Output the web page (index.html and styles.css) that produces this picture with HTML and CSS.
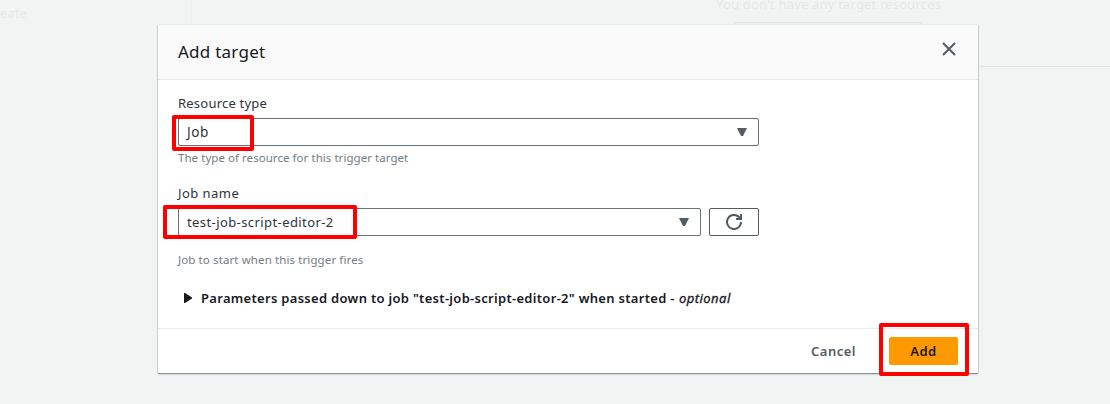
FILE: index.html
```html
<!DOCTYPE html>
<html lang="en">
<head>
<meta charset="utf-8">
<title>Add target</title>
<link rel="stylesheet" href="styles.css">
</head>
<body>
<div class="page">
  <div class="backdrop">
    <aside class="side"><span class="side-text">eate</span></aside>
    <main class="main">
      <div class="empty"><p class="empty-text">You don't have any target resources</p><div class="empty-button"></div></div>
    </main>
  </div>
  <section class="modal" role="dialog">
    <header class="modal-header">
      <h2 class="title">Add target</h2>
      <svg class="close" width="16" height="16" viewBox="0 0 16 16"><path d="M2 2l12 12M14 2L2 14" fill="none" stroke="#545b64" stroke-width="2"/></svg>
    </header>
    <div class="modal-body">
      <div class="label">Resource type</div>
      <div class="select"><span class="value-job">Job</span><svg width="10" height="8" viewBox="0 0 10 8"><path d="M0 0h10L6 8H4z" fill="#545b64"/></svg><span class="mark mark-job"></span></div>
      <div class="hint">The type of resource for this trigger target</div>
      <div class="label label-name">Job name</div>
      <div class="row">
        <div class="select select-name"><span class="value-name">test-job-script-editor-2</span><svg width="10" height="8" viewBox="0 0 10 8"><path d="M0 0h10L6 8H4z" fill="#545b64"/></svg><span class="mark mark-name"></span></div>
        <div class="refresh"><svg width="16" height="16" viewBox="0 0 16 16"><path d="M15 8A7 7 0 1 1 12.7 2.8L15 5" fill="none" stroke="#545b64" stroke-width="2"/><path d="M15 0v5h-5" fill="none" stroke="#545b64" stroke-width="2"/></svg></div>
      </div>
      <div class="hint hint-name">Job to start when this trigger fires</div>
      <div class="expander"><svg width="8" height="10" viewBox="0 0 8 10"><path d="M0 0h1l7 4.4v1.2L1 10H0z" fill="#16191f"/></svg><span class="params">Parameters passed down to job "test-job-script-editor-2" when started - </span><em class="optional">optional</em></div>
    </div>
    <footer class="modal-footer">
      <span class="cancel">Cancel</span>
      <div class="add"><span>Add</span><span class="mark mark-add"></span></div>
    </footer>
  </section>
</div>
</body>
</html>
```
FILE: styles.css
```css
* { box-sizing: border-box; }
body { margin: 0; background: #f2f4f4; font-family: "Noto Sans", "Open Sans", sans-serif; font-size: 13px; color: #16191f; }
.page { position: relative; width: 1110px; height: 404px; overflow: hidden; display: flex; justify-content: center; align-items: flex-start; padding: 25px 0 0 26px; }
.backdrop { position: absolute; inset: 0; display: flex; color: #e5e8e9; }
.side { width: 192px; border-right: 1px solid #eceeef; height: 67px; padding-top: 4px; }
.side-text { line-height: 18px; font-size: 13px; }
.main { flex: 1; height: 67px; border-bottom: 1px solid #e3e6e9; padding-left: 524px; }
.empty { width: 230px; }
.empty-text { margin: -6px 0 0; height: 22px; line-height: 20px; font-size: 13px; letter-spacing: 0.18px; white-space: nowrap; }
.empty-button { width: 188px; height: 30px; margin: 6px 0 0 18px; border: 1px solid #e1e4e5; border-radius: 2px; }
.modal { position: relative; width: 820px; height: 348px; background: #fff; box-shadow: 0 1px 0 #87939a, 1px 0 0 #c5cbce, -1px 0 0 #c9cece, 0 -1px 0 #e6eaea, 0 2px 1px #d5dbdb; display: flex; flex-direction: column; }
.modal-header { height: 55px; background: #fafafa; border-bottom: 1px solid #e6eaea; display: flex; justify-content: space-between; align-items: flex-start; padding: 15px 21px 0 20px; }
.title { margin: 0; font-weight: 400; font-size: 17px; line-height: 24px; letter-spacing: 0.25px; }
.close { margin-top: 1px; }
.modal-body { height: 248px; padding: 13px 20px 0; }
.label { height: 25px; line-height: 20px; color: #2f343b; font-size: 13px; letter-spacing: 0.22px; }
.label-name { margin-top: 17px; letter-spacing: 0.45px; }
.select { position: relative; width: 581px; height: 28px; border: 1px solid #687078; border-radius: 2px; display: flex; align-items: center; justify-content: space-between; padding: 0 11px 0 8px; color: #2f343b; font-size: 13px; }
.select-name { width: 523px; }
.value-job { font-size: 13.5px; letter-spacing: 0.6px; }
.value-name { letter-spacing: 0.41px; }
.row { display: flex; gap: 8px; }
.refresh { width: 50px; height: 28px; border: 1px solid #545b64; border-radius: 2px; display: flex; align-items: center; justify-content: center; }
.hint { margin-top: 4px; height: 16px; line-height: 16px; font-size: 11.5px; letter-spacing: 0.05px; color: #747c84; }
.hint-name { margin-top: 16px; letter-spacing: 0.11px; }
.expander { margin-top: 20px; height: 20px; padding-left: 6px; display: flex; align-items: center; font-size: 13px; font-weight: 600; white-space: pre; }
.expander svg { margin-right: 9px; }
.params { width: 478px; letter-spacing: 0.3px; }
.optional { font-weight: 400; letter-spacing: 0.45px; -webkit-text-stroke: 0.3px #16191f; }
.modal-footer { height: 45px; border-top: 1px solid #eaeded; display: flex; align-items: center; justify-content: flex-end; padding-right: 20px; font-size: 13px; font-weight: 600; letter-spacing: 0.5px; }
.cancel { color: #545b64; margin-right: 33px; }
.add { position: relative; width: 69px; height: 28px; background: #ff9900; border-radius: 2px; display: flex; align-items: center; justify-content: center; }
.mark { position: absolute; border: 4px solid #fe0000; border-radius: 2px; }
.mark-job { left: -7px; top: -4px; width: 82px; height: 36px; }
.mark-name { left: -16px; top: -4px; width: 194px; height: 34px; }
.mark-add { left: -10px; top: -14px; width: 90px; height: 53px; }
```
